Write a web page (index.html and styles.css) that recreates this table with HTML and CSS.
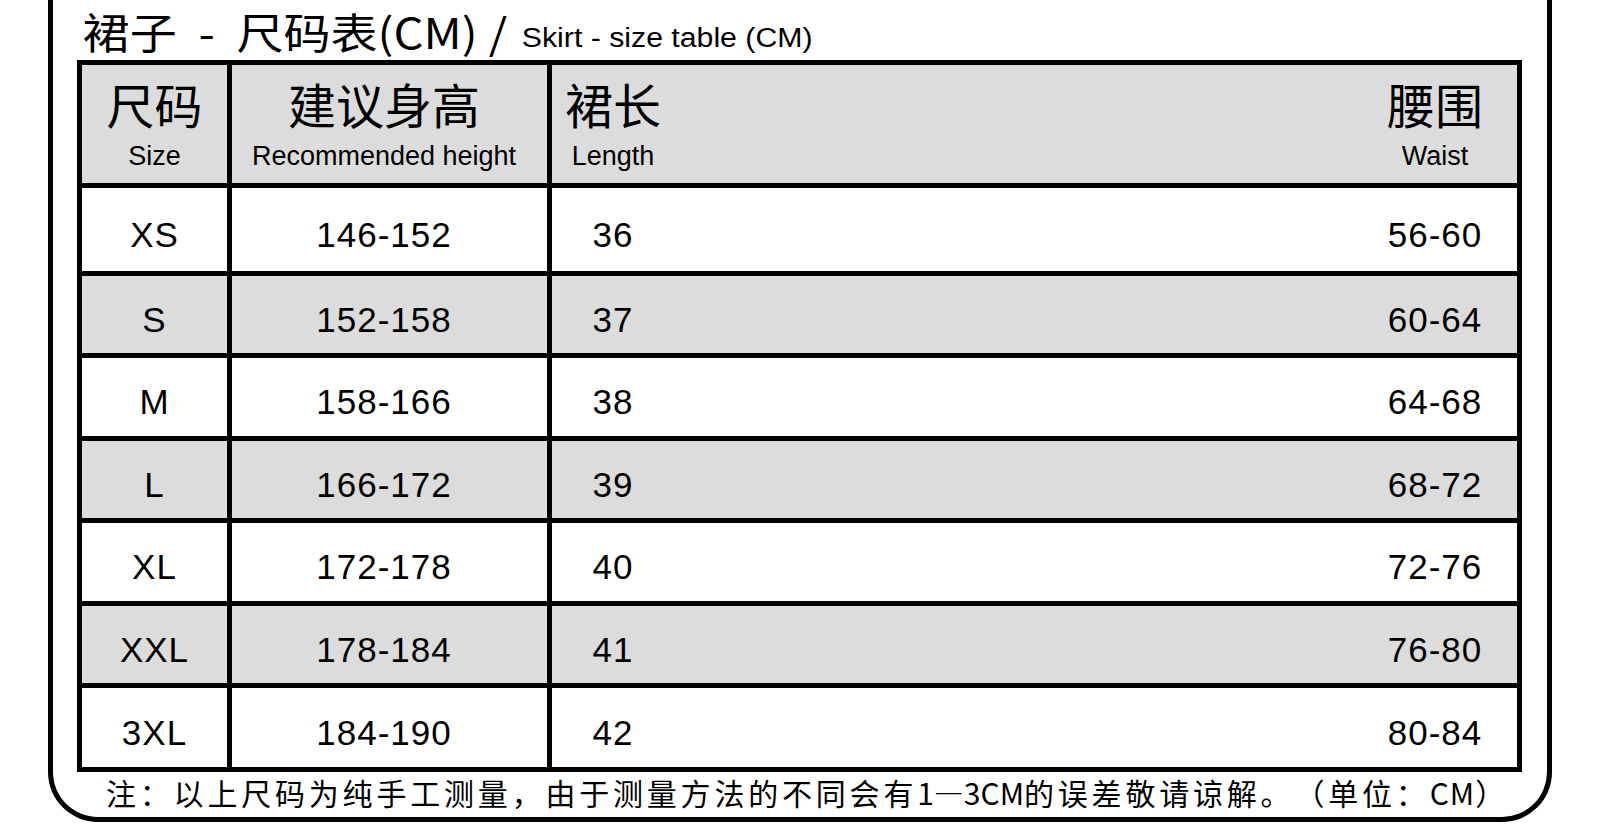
FILE: index.html
```html
<!DOCTYPE html>
<html lang="zh-CN">
<head>
<meta charset="utf-8">
<title>裙子 - 尺码表</title>
<link rel="stylesheet" href="styles.css">
</head>
<body>
<div class="frame">
  <div class="title"><span class="title-cn">裙子 - 尺码表(CM)</span><span class="slash">/</span><span class="title-en">Skirt - size table (CM)</span></div>
  <div class="table">
    <div class="cell head c1"><div class="cn">尺码</div><div class="en">Size</div></div>
    <div class="cell head c2"><div class="cn">建议身高</div><div class="en">Recommended height</div></div>
    <div class="cell head c3">
      <div class="sub sa"><div class="cn">裙长</div><div class="en">Length</div></div>
      <div class="sub sb"><div class="cn">腰围</div><div class="en">Waist</div></div>
    </div>

    <div class="cell data c1">XS</div>
    <div class="cell data c2">146-152</div>
    <div class="cell data c3"><div class="sub sa">36</div><div class="sub sb">56-60</div></div>

    <div class="cell data c1 grey">S</div>
    <div class="cell data c2 grey">152-158</div>
    <div class="cell data c3 grey"><div class="sub sa">37</div><div class="sub sb">60-64</div></div>

    <div class="cell data c1">M</div>
    <div class="cell data c2">158-166</div>
    <div class="cell data c3"><div class="sub sa">38</div><div class="sub sb">64-68</div></div>

    <div class="cell data c1 grey">L</div>
    <div class="cell data c2 grey">166-172</div>
    <div class="cell data c3 grey"><div class="sub sa">39</div><div class="sub sb">68-72</div></div>

    <div class="cell data c1">XL</div>
    <div class="cell data c2">172-178</div>
    <div class="cell data c3"><div class="sub sa">40</div><div class="sub sb">72-76</div></div>

    <div class="cell data c1 grey">XXL</div>
    <div class="cell data c2 grey">178-184</div>
    <div class="cell data c3 grey"><div class="sub sa">41</div><div class="sub sb">76-80</div></div>

    <div class="cell data c1">3XL</div>
    <div class="cell data c2">184-190</div>
    <div class="cell data c3"><div class="sub sa">42</div><div class="sub sb">80-84</div></div>
  </div>
  <div class="note">注：以上尺码为纯手工测量，由于测量方法的不同会有<span class="latin">1—3CM</span>的误差敬请谅解。（单位：<span class="latin unit">CM</span>）</div>
</div>
</body>
</html>
```

FILE: styles.css
```css
html, body {
  margin: 0;
  padding: 0;
  background: #ffffff;
}

body {
  width: 1600px;
  height: 837px;
  overflow: hidden;
  color: #000000;
  font-family: "Noto Sans CJK SC", sans-serif;
}

.frame {
  box-sizing: border-box;
  width: 1504px;
  height: 822px;
  margin-left: 48px;
  border: 5px solid #000000;
  border-top: 0;
  border-radius: 0 0 50px 50px;
  padding-left: 24px;
}

.title {
  width: max-content;
  height: 60px;
  line-height: 61px;
  padding-left: 5px;
  white-space: nowrap;
  transform: scaleX(1.12);
  transform-origin: left center;
  font-family: "Noto Sans CJK SC", sans-serif;
  font-size: 42px;
}

.title-cn {
  word-spacing: 10px;
}

.slash {
  margin-left: 10px;
}

.title-en {
  font-family: "Liberation Sans", "Noto Sans CJK SC", sans-serif;
  font-size: 27px;
  margin-left: 13px;
  vertical-align: 2px;
}

.table {
  box-sizing: border-box;
  width: 1445px;
  display: grid;
  grid-template-columns: 145px 315px 965px;
  grid-template-rows: 118px 83px 77px 78px 77px 78px 77px 79px;
  gap: 5px;
  padding: 5px;
  background: #000000;
}

.cell {
  background: #ffffff;
  box-sizing: border-box;
}

.cell.head,
.cell.grey {
  background: #dcdcdc;
}

.head.c1,
.head.c2,
.head .sub {
  display: flex;
  flex-direction: column;
  align-items: center;
  padding-top: 10px;
}

.head.c2 {
  padding-right: 11px;
}

.head .cn {
  font-family: "Noto Sans CJK SC", sans-serif;
  font-size: 48px;
  font-weight: 400;
  line-height: 56px;
  white-space: nowrap;
}

.head .en {
  font-family: "Liberation Sans", "Noto Sans CJK SC", sans-serif;
  font-size: 27px;
  line-height: 30px;
  margin-top: 10px;
  white-space: nowrap;
}

.c3 {
  display: grid;
  grid-template-columns: 122px 1fr 164px;
}

.c3 .sa {
  grid-column: 1;
}

.c3 .sb {
  grid-column: 3;
}

.data {
  font-family: "Liberation Sans", "Noto Sans CJK SC", sans-serif;
  font-size: 35px;
  letter-spacing: 1px;
}

.data.c1,
.data.c2,
.data .sub {
  display: flex;
  align-items: center;
  justify-content: center;
  padding-top: 10px;
  box-sizing: border-box;
}

.data.c2 {
  padding-right: 11px;
}

.note {
  margin-left: 29px;
  font-family: "Noto Sans CJK SC", sans-serif;
  font-size: 30px;
  line-height: 41px;
  letter-spacing: 3.8px;
  white-space: nowrap;
  text-spacing-trim: space-all;
}

.note .latin {
  letter-spacing: 0;
}

.note .unit {
  letter-spacing: 1px;
}
```
